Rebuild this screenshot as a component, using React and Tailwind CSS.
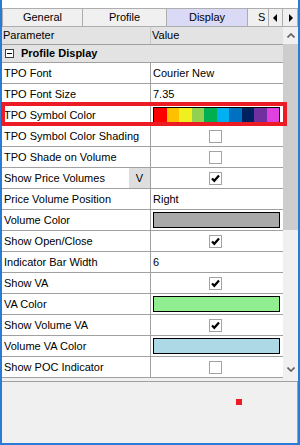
import React from "react";

const F = { fontFamily: '"Liberation Sans", Arial, sans-serif' };

function Check({ checked }) {
  return (
    <div className="w-[13px] h-[13px] border border-[#a3a3a3] bg-white flex items-center justify-center">
      {checked && (
        <svg width="11" height="11" viewBox="0 0 11 11">
          <path d="M2 5.5 L4.3 7.8 L9 2.5" stroke="#000" strokeWidth="2.2" fill="none" strokeLinecap="butt" />
        </svg>
      )}
    </div>
  );
}

function Swatch({ color }) {
  return <div className="mx-[2px] h-[16px] w-[127px] border border-black" style={{ background: color }} />;
}

function Rainbow() {
  const cols = ["#ff0000", "#ffc000", "#f0f020", "#92d050", "#00b050", "#00b0f0", "#0070c0", "#002060", "#7030a0", "#e040e0"];
  return (
    <div className="mx-[2px] h-[16px] w-[127px] border border-black flex">
      {cols.map((c, i) => (
        <div key={i} className="flex-1 h-full" style={{ background: c }} />
      ))}
    </div>
  );
}

const rows = [
  { n: "TPO Font", v: { t: "text", s: "Courier New" } },
  { n: "TPO Font Size", v: { t: "text", s: "7.35" } },
  { n: "TPO Symbol Color", v: { t: "rainbow" } },
  { n: "TPO Symbol Color Shading", v: { t: "check", c: false } },
  { n: "TPO Shade on Volume", v: { t: "check", c: false } },
  { n: "Show Price Volumes", v: { t: "check", c: true }, btn: true },
  { n: "Price Volume Position", v: { t: "text", s: "Right" } },
  { n: "Volume Color", v: { t: "color", c: "#a9a9a9" } },
  { n: "Show Open/Close", v: { t: "check", c: true } },
  { n: "Indicator Bar Width", v: { t: "text", s: "6" } },
  { n: "Show VA", v: { t: "check", c: true } },
  { n: "VA Color", v: { t: "color", c: "#90ee90" } },
  { n: "Show Volume VA", v: { t: "check", c: true } },
  { n: "Volume VA Color", v: { t: "color", c: "#add8e6" } },
  { n: "Show POC Indicator", v: { t: "check", c: false } },
];

function Value({ v }) {
  if (v.t === "text") return <div className="pl-[2px] text-[11px] text-black">{v.s}</div>;
  if (v.t === "check")
    return (
      <div className="w-full flex justify-center pr-[2px]">
        <Check checked={v.c} />
      </div>
    );
  if (v.t === "color") return <Swatch color={v.c} />;
  return <Rainbow />;
}

export default function App() {
  return (
    <div style={F} className="relative w-[300px] h-[445px] bg-white border-l-2 border-r-2 border-b-2 border-[#2a7bd5] flex flex-col text-black">
      <div className="h-[8px] shrink-0" />
      {/* Tabs */}
      <div className="h-[19px] shrink-0 flex text-[11px] border-b border-[#adadad]">
        <div className="w-[81px] border border-b-0 border-[#adadad] bg-[#f0f0f0] flex items-center justify-center">General</div>
        <div className="w-[84px] border-t border-r border-[#adadad] bg-[#f0f0f0] flex items-center justify-center">Profile</div>
        <div className="w-[81px] border-t border-r border-[#adadad] bg-[#dadaf7] flex items-center justify-center">Display</div>
        <div className="w-[20px] border-t border-[#adadad] bg-[#f0f0f0] flex items-center pl-[10px] overflow-hidden">S</div>
        <div className="w-[15px] border border-b-0 border-[#adadad] bg-[#f0f0f0] flex items-center justify-center">
          <svg width="5" height="8" viewBox="0 0 5 8"><path d="M4 0 L4 8 L0 4 Z" fill="#000" /></svg>
        </div>
        <div className="w-[15px] border-t border-r border-[#adadad] bg-[#f0f0f0] flex items-center justify-center">
          <svg width="5" height="8" viewBox="0 0 5 8"><path d="M1 0 L1 8 L5 4 Z" fill="#000" /></svg>
        </div>
      </div>
      {/* Grid + scrollbar */}
      <div className="flex shrink-0">
        <div className="w-[281px] flex flex-col">
          <div className="h-[18px] flex bg-[#e3e3e3] border-b border-[#a0a0a0] text-[11px]">
            <div className="w-[149px] border-r border-[#c8c8c8] pl-[1px] flex items-center">Parameter</div>
            <div className="flex-1 pl-[1px] flex items-center">Value</div>
          </div>
          <div className="h-[18px] flex items-center bg-[#e3e3e3] border-b border-[#a0a0a0] text-[11px]">
            <div className="ml-[3px] w-[9px] h-[9px] border border-[#404040] bg-white flex items-center justify-center">
              <div className="w-[5px] h-[1px] bg-black" />
            </div>
            <div className="ml-[7px] font-bold">Profile Display</div>
          </div>
          {rows.map((r, i) => (
            <div key={i} className="h-[21px] flex border-b border-[#a0a0a0] text-[11px]">
              <div className="w-[149px] border-r border-[#a0a0a0] flex items-center justify-between">
                <div className="pl-[2px]">{r.n}</div>
                {r.btn && <div className="w-[21px] h-full bg-[#dedede] flex items-center justify-center">V</div>}
              </div>
              <div className="w-[131px] flex items-center">
                <Value v={r.v} />
              </div>
            </div>
          ))}
        </div>
        <div className="w-[15px] bg-[#f0f0f0] flex flex-col">
          <div className="h-[17px] flex items-center justify-center">
            <svg width="8" height="5" viewBox="0 0 8 5"><path d="M0.5 4.5 L4 1 L7.5 4.5" stroke="#606060" strokeWidth="1.6" fill="none" /></svg>
          </div>
          <div className="h-[186px] bg-[#cdcdcd]" />
          <div className="flex-1" />
          <div className="h-[17px] flex items-center justify-center">
            <svg width="8" height="5" viewBox="0 0 8 5"><path d="M0.5 0.5 L4 4 L7.5 0.5" stroke="#606060" strokeWidth="1.6" fill="none" /></svg>
          </div>
        </div>
      </div>
      {/* Bottom panel */}
      <div className="flex-1 bg-[#f0f0f0] pt-[3px] flex flex-col">
        <div className="flex-1 border-t border-r border-[#a0a0a0] pl-[234px] pt-[17px]">
          <div className="w-[6px] h-[6px] bg-[#ed1c24]" />
        </div>
      </div>
      {/* Red annotation */}
      <div className="absolute left-[-1px] top-[102px] w-[286px] h-[24px] border-4 border-[#ed1c24]" />
    </div>
  );
}
